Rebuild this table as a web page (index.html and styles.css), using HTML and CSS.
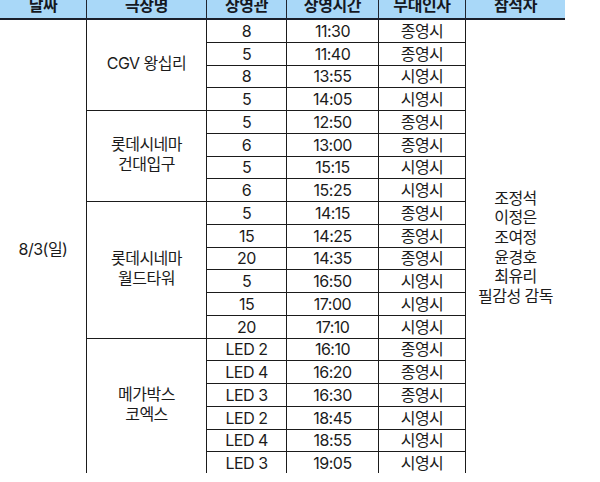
FILE: index.html
```html
<!DOCTYPE html>
<html lang="ko">
<head>
<meta charset="utf-8">
<title>무대인사 일정</title>
<link rel="stylesheet" href="styles.css">
</head>
<body>
<div class="frame">
  <div class="schedule">
    <div class="th">날짜</div>
    <div class="th">극장명</div>
    <div class="th">상영관</div>
    <div class="th">상영시간</div>
    <div class="th">무대인사</div>
    <div class="th last">참석자</div>

    <div class="date">8/3(일)</div>
    <div class="theater s4">CGV 왕십리</div>
    <div class="td">8</div><div class="td">11:30</div><div class="td">종영시</div>
    <div class="cast">조정석<br>이정은<br>조여정<br>윤경호<br>최유리<br>필감성 감독</div>
    <div class="td">5</div><div class="td">11:40</div><div class="td">종영시</div>
    <div class="td">8</div><div class="td">13:55</div><div class="td">시영시</div>
    <div class="td">5</div><div class="td">14:05</div><div class="td">시영시</div>

    <div class="theater s4">롯데시네마<br>건대입구</div>
    <div class="td">5</div><div class="td">12:50</div><div class="td">종영시</div>
    <div class="td">6</div><div class="td">13:00</div><div class="td">종영시</div>
    <div class="td">5</div><div class="td">15:15</div><div class="td">시영시</div>
    <div class="td">6</div><div class="td">15:25</div><div class="td">시영시</div>

    <div class="theater s6">롯데시네마<br>월드타워</div>
    <div class="td">5</div><div class="td">14:15</div><div class="td">종영시</div>
    <div class="td">15</div><div class="td">14:25</div><div class="td">종영시</div>
    <div class="td">20</div><div class="td">14:35</div><div class="td">종영시</div>
    <div class="td">5</div><div class="td">16:50</div><div class="td">시영시</div>
    <div class="td">15</div><div class="td">17:00</div><div class="td">시영시</div>
    <div class="td">20</div><div class="td">17:10</div><div class="td">시영시</div>

    <div class="theater s6">메가박스<br>코엑스</div>
    <div class="td">LED 2</div><div class="td">16:10</div><div class="td">종영시</div>
    <div class="td">LED 4</div><div class="td">16:20</div><div class="td">종영시</div>
    <div class="td">LED 3</div><div class="td">16:30</div><div class="td">종영시</div>
    <div class="td">LED 2</div><div class="td">18:45</div><div class="td">시영시</div>
    <div class="td">LED 4</div><div class="td">18:55</div><div class="td">시영시</div>
    <div class="td">LED 3</div><div class="td">19:05</div><div class="td">시영시</div>
  </div>
</div>
</body>
</html>
```

FILE: styles.css
```css
html, body {
  margin: 0;
  padding: 0;
  background: #ffffff;
}

.frame {
  width: 600px;
  height: 473px;
  overflow: hidden;
  background: #ffffff;
}

.schedule {
  margin-top: -7px;
  display: grid;
  grid-template-columns: 87px 120px 80px 92px 87px 99px;
  grid-template-rows: 27px repeat(20, 22.75px);
  font-family: Inter, "Noto Sans CJK KR", "Noto Sans", sans-serif;
  color: #1b1b1b;
  font-size: 16px;
}

.th {
  box-sizing: border-box;
  background: #a9d8f8;
  border-bottom: 2px solid #1a1f2b;
  border-right: 1px solid #1f2530;
  display: flex;
  align-items: center;
  justify-content: center;
  padding-bottom: 3px;
  font-family: "Noto Sans CJK KR", sans-serif;
  font-weight: 700;
  font-size: 16px;
  letter-spacing: -0.4px;
  color: #15181f;
}

.th.last {
  border-right: none;
}

.td {
  box-sizing: border-box;
  border-right: 1px solid #1b1b1b;
  border-bottom: 1px solid #1b1b1b;
  display: flex;
  align-items: center;
  justify-content: center;
  letter-spacing: -0.5px;
  line-height: 1;
}

.date {
  grid-row: span 20;
  box-sizing: border-box;
  border-right: 1px solid #1b1b1b;
  display: flex;
  align-items: center;
  justify-content: center;
  letter-spacing: -0.5px;
}

.theater {
  box-sizing: border-box;
  border-right: 1px solid #1b1b1b;
  border-bottom: 1px solid #1b1b1b;
  display: flex;
  align-items: center;
  justify-content: center;
  text-align: center;
  line-height: 20px;
  letter-spacing: -0.5px;
  padding-bottom: 4px;
}

.theater.s4 {
  grid-row: span 4;
}

.theater.s6 {
  grid-row: span 6;
}

.cast {
  grid-row: span 20;
  display: flex;
  align-items: center;
  justify-content: center;
  text-align: center;
  line-height: 19.6px;
  letter-spacing: -0.5px;
}
```
